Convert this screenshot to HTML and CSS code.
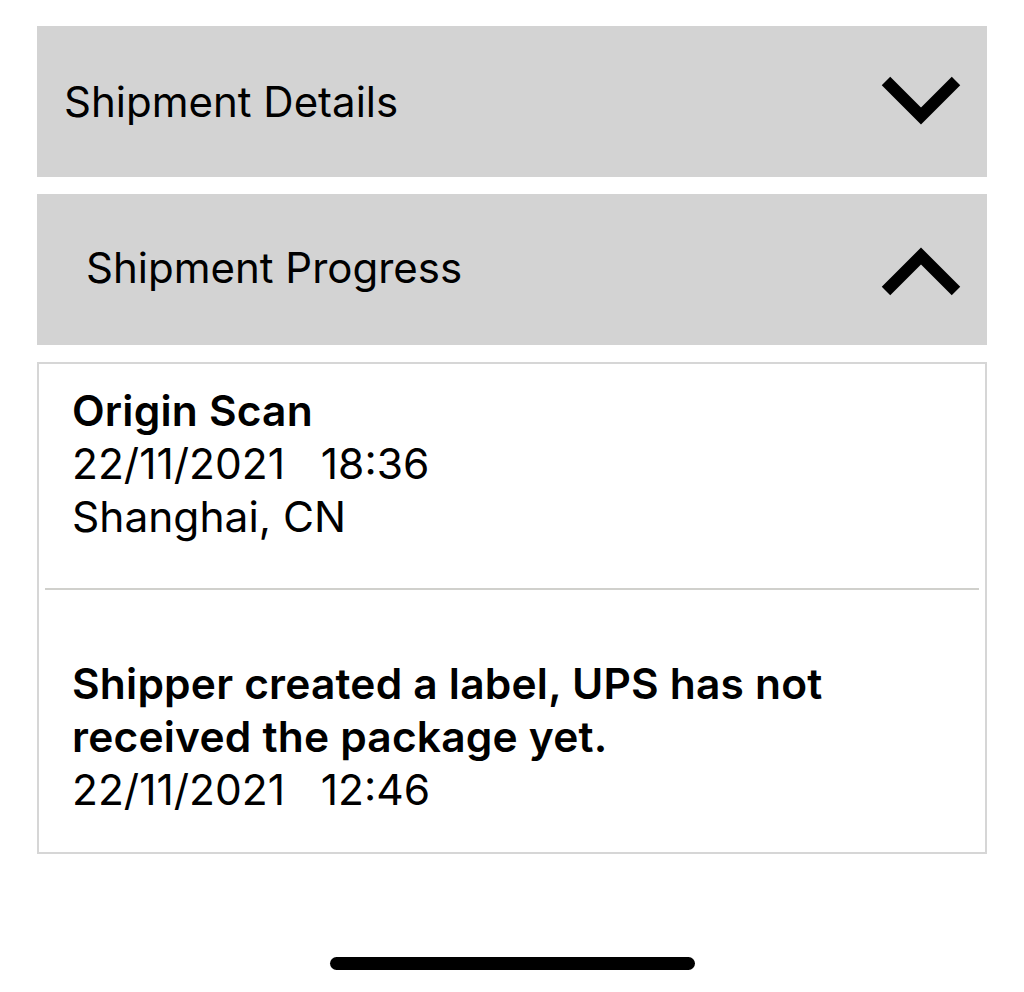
FILE: index.html
```html
<!DOCTYPE html>
<html>
<head>
<meta charset="utf-8">
<link rel="stylesheet" href="styles.css">
</head>
<body>
<div class="page">
  <div class="panel">
    <span class="panel-title">Shipment Details</span>
    <svg class="chev" width="80" height="52" viewBox="0 0 80 52"><polyline points="5,5 40,40 75,5" fill="none" stroke="#000" stroke-width="12"/></svg>
  </div>
  <div class="panel">
    <span class="panel-title indent">Shipment Progress</span>
    <svg class="chev" width="80" height="52" viewBox="0 0 80 52"><polyline points="5,47 40,12 75,47" fill="none" stroke="#000" stroke-width="12"/></svg>
  </div>
  <div class="events">
    <div class="event first">
      <div class="ev-title">Origin Scan</div>
      <div class="ev-line">22/11/2021&nbsp;&nbsp;&nbsp;18:36</div>
      <div class="ev-line">Shanghai, CN</div>
    </div>
    <div class="divider"></div>
    <div class="event second">
      <div class="ev-title">Shipper created a label, UPS has not received the package yet.</div>
      <div class="ev-line">22/11/2021&nbsp;&nbsp;&nbsp;12:46</div>
    </div>
  </div>
  <div class="home-wrap"><div class="home"></div></div>
</div>
</body>
</html>
```
FILE: styles.css
```css
html, body {
  margin: 0;
  padding: 0;
  background: #fff;
}
body {
  font-family: Inter, "Noto Sans", sans-serif;
  color: #000;
}
.page {
  width: 950px;
  margin-left: 37px;
  padding-top: 26px;
}
.panel {
  height: 151px;
  background: #d3d3d3;
  display: flex;
  align-items: center;
  justify-content: space-between;
  padding: 0 26px 0 27px;
  margin-bottom: 17px;
}
.panel-title {
  font-size: 42px;
}
.panel-title.indent {
  padding-left: 22px;
  margin-top: -4px;
}
.chev {
  display: block;
}
.events {
  border: 2px solid #d6d6d6;
  padding: 0 6px;
}
.event {
  padding-left: 27px;
  font-size: 42.5px;
  line-height: 53px;
}
.event.first {
  padding-top: 20px;
  padding-bottom: 45px;
}
.event.second {
  padding-top: 67px;
  padding-bottom: 36px;
  padding-right: 100px;
}
.ev-title {
  font-weight: 600;
  letter-spacing: 0.2px;
}
.divider {
  height: 2px;
  background: #d0d0cc;
}
.home-wrap {
  display: flex;
  justify-content: center;
  padding-top: 103px;
}
.home {
  width: 365px;
  height: 13px;
  border-radius: 7px;
  background: #000;
}
```
